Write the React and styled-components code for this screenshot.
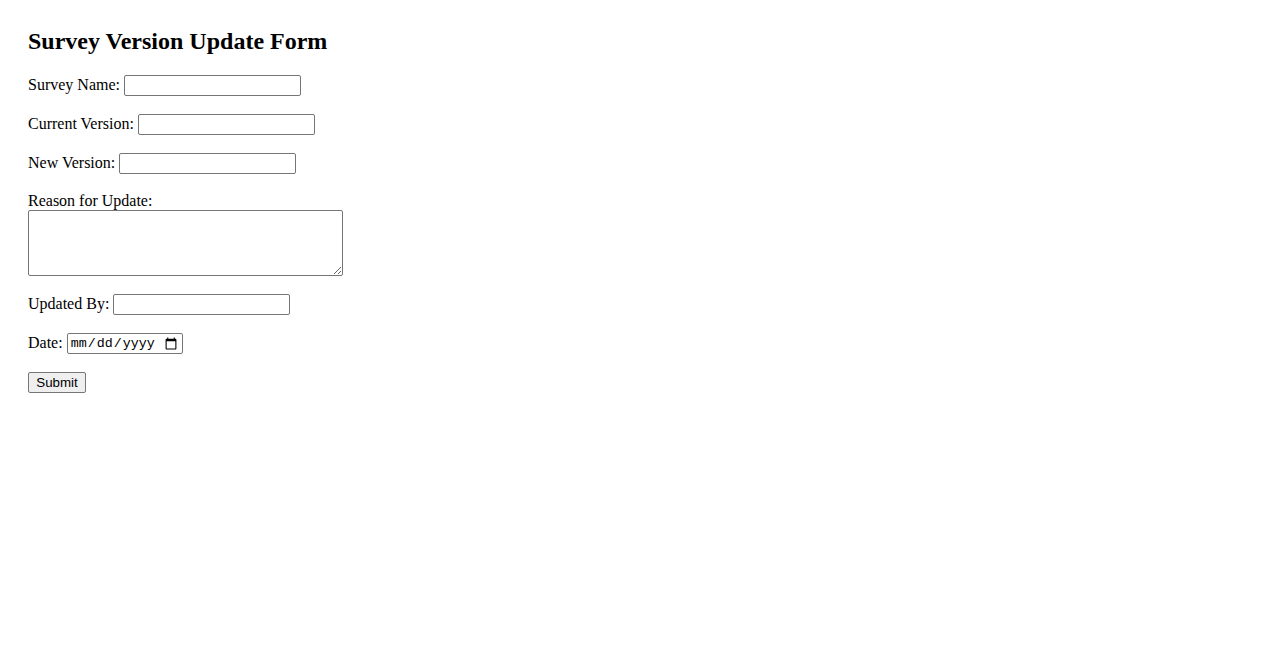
import React from "react";
import styled, { createGlobalStyle } from "styled-components";

const Global = createGlobalStyle`
  html, body { margin: 0; padding: 0; background: #ffffff; }
  body {
    font-family: "Liberation Serif", "Times New Roman", serif;
    font-size: 16px;
    color: #000000;
  }
`;

const Page = styled.main`
  padding: 28px;
`;

const Title = styled.h2`
  margin: 0 0 20px;
  font-size: 24px;
  font-weight: bold;
  line-height: 27px;
`;

const Form = styled.form`
  display: flex;
  flex-direction: column;
  align-items: flex-start;
  gap: 18px;
`;

const Row = styled.div`
  display: flex;
  align-items: ${(p) => (p.$stacked ? "flex-start" : "center")};
  flex-direction: ${(p) => (p.$stacked ? "column" : "row")};
  gap: ${(p) => (p.$stacked ? "0" : "4px")};
  line-height: 18px;
`;

const Label = styled.label`
  font-family: "Liberation Serif", "Times New Roman", serif;
  font-size: 16px;
  margin-bottom: ${(p) => (p.$stacked ? "0" : "2px")};
`;

const TextInput = styled.input`
  box-sizing: border-box;
  width: ${(p) => p.$w || "177px"};
  height: 21px;
  margin: 0;
  padding: 1px 2px;
  border: 1px solid #767676;
  border-radius: 2px;
  background: #ffffff;
  font-family: "Liberation Sans", Arial, sans-serif;
  font-size: 13.33px;
`;

const DateInput = styled(TextInput)`
  font-family: "Liberation Mono", "Courier New", monospace;
  font-size: 13.33px;
  padding: 1px 2px;
`;

const TextArea = styled.textarea`
  box-sizing: border-box;
  width: 315px;
  height: 66px;
  margin: 0;
  padding: 2px;
  border: 1px solid #767676;
  border-radius: 2px;
  font-family: "Liberation Mono", monospace;
  font-size: 13.33px;
`;

const Button = styled.button`
  box-sizing: border-box;
  width: 58px;
  height: 21px;
  padding: 1px 6px;
  margin: 0;
  border: 1px solid #767676;
  border-radius: 2px;
  background: #efefef;
  color: #000000;
  font-family: "Liberation Sans", Arial, sans-serif;
  font-size: 13.33px;
  line-height: 15px;
`;

export default function App() {
  return (
    <>
      <Global />
      <Page>
        <Title>Survey Version Update Form</Title>
        <Form onSubmit={(e) => e.preventDefault()}>
          <Row>
            <Label htmlFor="sn">Survey Name:</Label>
            <TextInput id="sn" type="text" />
          </Row>
          <Row>
            <Label htmlFor="cv">Current Version:</Label>
            <TextInput id="cv" type="text" />
          </Row>
          <Row>
            <Label htmlFor="nv">New Version:</Label>
            <TextInput id="nv" type="text" />
          </Row>
          <Row $stacked>
            <Label htmlFor="ru" $stacked>Reason for Update:</Label>
            <TextArea id="ru" />
          </Row>
          <Row>
            <Label htmlFor="ub">Updated By:</Label>
            <TextInput id="ub" type="text" />
          </Row>
          <Row>
            <Label htmlFor="dt">Date:</Label>
            <DateInput id="dt" type="date" $w="116px" />
          </Row>
          <Button type="submit">Submit</Button>
        </Form>
      </Page>
    </>
  );
}
